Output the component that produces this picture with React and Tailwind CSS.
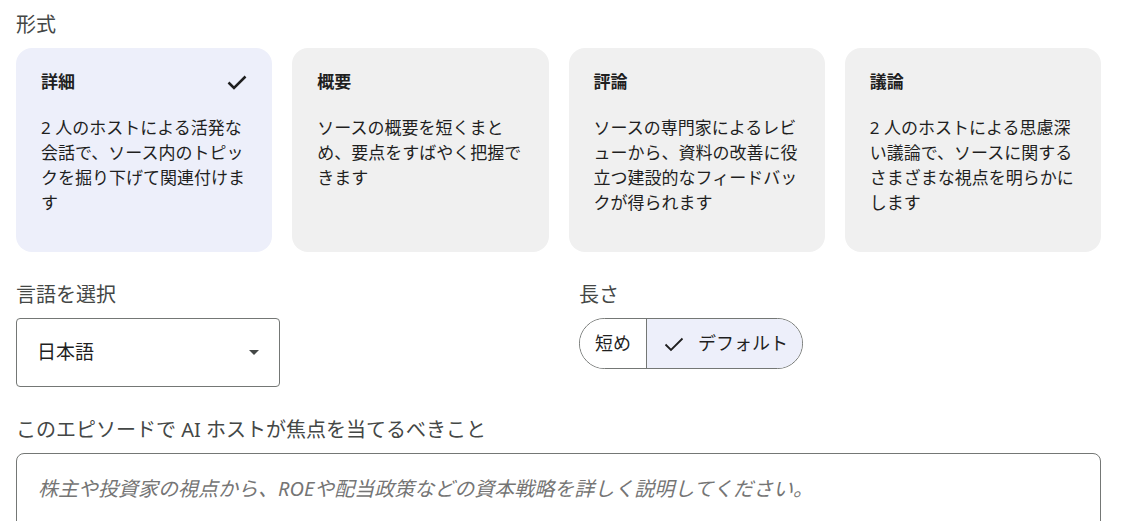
import { useState } from 'react';

const FONT = { fontFamily: '"Noto Sans", "Noto Sans CJK JP", sans-serif' };

const formats = [
  { id: 'detail', title: '詳細', desc: '2 人のホストによる活発な会話で、ソース内のトピックを掘り下げて関連付けます' },
  { id: 'brief', title: '概要', desc: 'ソースの概要を短くまとめ、要点をすばやく把握できます' },
  { id: 'critique', title: '評論', desc: 'ソースの専門家によるレビューから、資料の改善に役立つ建設的なフィードバックが得られます' },
  { id: 'debate', title: '議論', desc: '2 人のホストによる思慮深い議論で、ソースに関するさまざまな視点を明らかにします' },
];

function Check({ className, width = 2.4 }) {
  return (
    <svg className={className} viewBox="0 0 24 24" fill="none" stroke="currentColor" strokeWidth={width}>
      <path d="M3.5 12.5 9 18 20.5 6.5" />
    </svg>
  );
}

function Label({ children }) {
  return <div className="text-[20px] leading-[28px] text-[#444746]">{children}</div>;
}

export default function App() {
  const [format, setFormat] = useState('detail');
  const [length, setLength] = useState('default');

  return (
    <div className="min-h-screen bg-white pl-4 pr-7 pt-[11px] text-[#1f1f1f]" style={FONT}>
      <Label>形式</Label>

      <div className="mt-[9px] grid grid-cols-4 gap-5">
        {formats.map((f) => {
          const on = f.id === format;
          return (
            <button
              key={f.id}
              onClick={() => setFormat(f.id)}
              className={`flex h-[204px] flex-col rounded-2xl px-[25px] pt-6 text-left ${on ? 'bg-[#edeffa]' : 'bg-[#f0f0f0]'}`}
            >
              <div className="flex h-5 w-full items-center justify-between">
                <span className="text-[17px] font-bold leading-5">{f.title}</span>
                {on && <Check className="-mr-[2px] h-[24px] w-[24px]" width={2.5} />}
              </div>
              <p className="mt-[23px] text-[17px] leading-[25px]">{f.desc}</p>
            </button>
          );
        })}
      </div>

      <div className="mt-[29px] flex">
        <div className="w-[563px]">
          <Label>言語を選択</Label>
          <div className="mt-[9px] flex h-[69px] w-[264px] items-center justify-between rounded border border-[#747775] pl-[20px] pr-[20px]">
            <span className="text-[19px]">日本語</span>
            <span className="h-0 w-0 border-x-[5px] border-t-[5px] border-x-transparent border-t-[#444746]" />
          </div>
        </div>

        <div>
          <Label>長さ</Label>
          <div className="mt-[9px] flex h-[51px] overflow-hidden rounded-full border border-[#747775] text-[18px]">
            <button
              onClick={() => setLength('short')}
              className={`flex items-center px-[15px] ${length === 'short' ? 'bg-[#edeffa]' : 'bg-white'}`}
            >
              短め
            </button>
            <button
              onClick={() => setLength('default')}
              className={`flex items-center gap-[12px] border-l border-[#747775] pl-[15px] pr-[14px] ${length === 'default' ? 'bg-[#edeffa]' : 'bg-white'}`}
            >
              {length === 'default' && <Check className="h-[24px] w-[24px]" width={1.8} />}
              デフォルト
            </button>
          </div>
        </div>
      </div>

      <div className="mt-[29px]">
        <Label>このエピソードで AI ホストが焦点を当てるべきこと</Label>
        <textarea
          className="mt-[9px] block h-[120px] w-full resize-none rounded-lg border border-[#747775] px-[21px] pt-[20px] text-[20px] italic outline-none placeholder:text-[#757575]"
          style={FONT}
          placeholder="株主や投資家の視点から、ROEや配当政策などの資本戦略を詳しく説明してください。"
        />
      </div>
    </div>
  );
}
